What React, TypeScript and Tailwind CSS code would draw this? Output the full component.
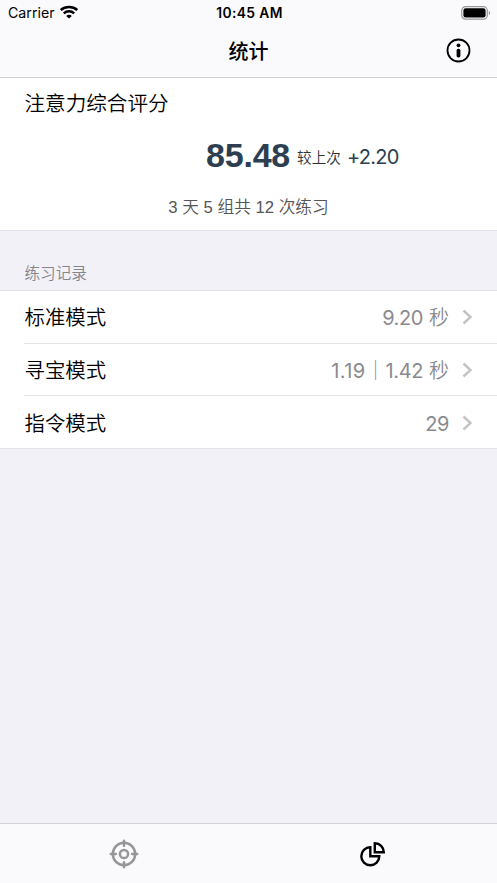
import React from "react";

const sans = "font-['Inter','Noto_Sans_CJK_SC',sans-serif]";

function StatusBar() {
  return (
    <div className="flex h-[26px] items-center justify-between text-black">
      <div className="flex flex-1 items-center gap-[5px] pl-[8px]">
        <span className="text-[14.2px] leading-[26px]">Carrier</span>
        <svg width="18" height="14" viewBox="0 0 18 14" className="-mt-[2px]" fill="none" stroke="currentColor">
          <path d="M.7 5.1C5.2.9 12.8.9 17.3 5.1" strokeWidth="2.6" />
          <path d="M3.8 8.3c2.9-2.7 7.5-2.7 10.4 0" strokeWidth="2.4" />
          <path d="M9 13.5 6.2 10.9c1.6-1.5 4-1.5 5.6 0Z" fill="currentColor" stroke="none" />
        </svg>
      </div>
      <span className="text-[13.8px] leading-[26px] font-semibold tracking-[0.4px]">10:45 AM</span>
      <div className="flex flex-1 justify-end pr-[6px]">
        <svg width="30" height="14" viewBox="0 0 30 14" className="-mt-[1px]">
          <rect x=".7" y=".7" width="25.6" height="12.4" rx="3.8" fill="none" stroke="#98989b" strokeWidth="1.2" />
          <rect x="2.4" y="2.3" width="22.2" height="9.2" rx="2.2" fill="#000" />
          <path d="M27.8 4.8c1.9.9 1.9 3.6 0 4.5Z" fill="#98989b" />
        </svg>
      </div>
    </div>
  );
}

function NavBar() {
  return (
    <div className="grid h-[51px] grid-cols-3 items-center">
      <h1 className="col-start-2 text-center text-[20px] leading-[30px] font-medium text-black">统计</h1>
      <div className="-mt-[3px] flex justify-end pr-[26px]">
        <svg width="25" height="25" viewBox="0 0 25 25">
          <circle cx="12.5" cy="12.5" r="11" fill="none" stroke="#000" strokeWidth="1.8" />
          <circle cx="12.5" cy="7.3" r="1.9" />
          <rect x="10.6" y="10.7" width="3.8" height="8.8" rx="1.7" />
        </svg>
      </div>
    </div>
  );
}

function Row({ label, children, last }: { label: string; children: React.ReactNode; last?: boolean }) {
  return (
    <div className={`ml-[24px] flex items-center pr-[24px] ${last ? "h-[52px]" : "h-[52.5px] border-b border-[#e5e5e8]"}`}>
      <span className="flex-1 pt-[3px] pl-[0.5px] text-[20.4px] leading-[30px] font-[350] text-black">{label}</span>
      <span className="flex pt-[3px] text-[20px] leading-[30px] text-[#8a8a8e]">{children}</span>
      <svg width="11" height="16" viewBox="0 0 11 16" className="mt-[1px] ml-[13px]" fill="none" stroke="#c4c4c7" strokeWidth="2.4">
        <path d="m1.5 1.5 7 6.5-7 6.5" />
      </svg>
    </div>
  );
}

export default function App() {
  return (
    <div className={`flex h-[883px] w-[497px] flex-col bg-[#f2f1f7] ${sans}`}>
      <header className="h-[78px] border-b border-[#d2d2d5] bg-[#fafafc]">
        <StatusBar />
        <NavBar />
      </header>

      <section className="h-[153px] border-b border-[#e2e1e7] bg-white">
        <h2 className="pt-[11px] pl-[24.5px] text-[20.6px] leading-[30px] font-[350] text-black">注意力综合评分</h2>
        <div className="mt-[16px] flex h-[40px] items-center pl-[206px]">
          <span className="font-['Liberation_Sans',sans-serif] text-[34px] leading-[40px] font-bold tracking-[-0.2px] text-[#2c3e50]">85.48</span>
          <span className="mt-[5px] ml-[7px] text-[14.6px] leading-[20px] font-[350] text-[#333]">较上次</span>
          <span className="mt-[4px] ml-[6px] text-[20px] leading-[30px] tracking-[-0.7px] text-[#2c3e50]">+2.20</span>
        </div>
        <p className="mt-[21px] text-center font-['Liberation_Sans','Noto_Sans_CJK_SC',sans-serif] text-[16.7px] leading-[24px] font-[350] text-[#555]">3 天 5 组共 12 次练习</p>
      </section>

      <h3 className="h-[59px] pt-[32px] pl-[24.5px] text-[15.6px] leading-[22px] font-[350] text-[#85858a]">练习记录</h3>

      <section className="border-y border-[#e2e1e7] bg-white">
        <Row label="标准模式">
          <span className="tracking-[-0.4px]">9.20</span>
          <span className="ml-[6px] font-[350]">秒</span>
        </Row>
        <Row label="寻宝模式">
          <span className="tracking-[0.4px]">1.19</span>
          <span className="font-[350]">｜</span>
          <span className="tracking-[-0.4px]">1.42</span>
          <span className="ml-[6px] font-[350]">秒</span>
        </Row>
        <Row label="指令模式" last>
          <span className="tracking-[-0.4px]">29</span>
        </Row>
      </section>

      <nav className="mt-auto grid h-[60px] grid-cols-2 border-t border-[#d2d2d5] bg-[#fafafc]">
        <div className="flex items-center justify-center">
          <svg width="30" height="30" viewBox="0 0 30 30" fill="none" stroke="#969699" strokeWidth="2.5" strokeLinecap="round">
            <circle cx="15" cy="15" r="11.2" />
            <circle cx="15" cy="15" r="4.1" />
            <path d="M15 1.8v5M15 23.2v5M1.8 15h5M23.2 15h5" />
          </svg>
        </div>
        <div className="flex items-center justify-center">
          <svg width="26" height="26" viewBox="0 0 26 26" fill="none" stroke="#000" strokeWidth="2.4">
            <path d="M10.3 6.2a9 9 0 1 0 9 9h-9Z" />
            <path d="M14.8 2.2v9h9a9 9 0 0 0-9-9Z" />
          </svg>
        </div>
      </nav>
    </div>
  );
}
